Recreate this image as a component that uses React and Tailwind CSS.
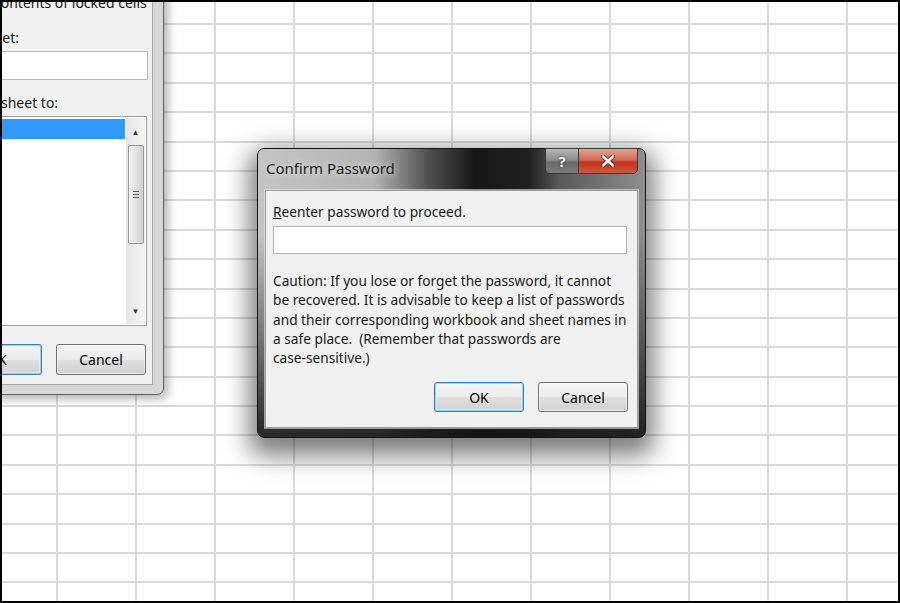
import React from "react";

const COLS = [56, 79, 79, 79, 79, 79, 79, 79, 79, 79, 79, 79];
const ROWS = [23, ...Array.from({ length: 20 }, () => 29.4)];

function Grid() {
  return (
    <div className="flex flex-col">
      {ROWS.map((h, r) => (
        <div key={r} className="flex border-b-2 border-[#dadada] box-border shrink-0" style={{ height: h }}>
          {COLS.map((w, c) => (
            <div key={c} className="border-r-2 border-[#dadada] box-border shrink-0 h-full" style={{ width: w }} />
          ))}
        </div>
      ))}
    </div>
  );
}

function WinButton({ children, def, className = "" }) {
  return (
    <div
      className={
        "flex items-center justify-center rounded-[3px] border text-[14px] text-black bg-[linear-gradient(180deg,#f4f4f4_0%,#ececec_50%,#dedede_51%,#d2d2d2_100%)] " +
        (def
          ? "border-[#3c7fb1] shadow-[inset_0_0_0_1px_rgba(120,200,245,0.75),inset_0_0_0_2px_rgba(230,245,253,0.6)] "
          : "border-[#707070] shadow-[inset_0_0_0_1px_rgba(255,255,255,0.6)] ") +
        className
      }
    >
      {children}
    </div>
  );
}

function LeftDialog() {
  return (
    <div className="absolute left-[-42px] top-[-42px] w-[204px] h-[435px] bg-[#d8d8d8] border border-[#5f5f5f] rounded-br-[7px] pr-[10px] pb-[9px] shadow-[4px_4px_10px_rgba(0,0,0,0.3)] box-border">
      <div className="w-full h-full bg-[#f0f0f0] border-r border-b border-[#a8a8a8] flex flex-col box-border text-[14px] leading-[19px] text-[#1a1a1a]">
        <div className="mt-[32px] ml-[33px] whitespace-nowrap">contents of locked cells</div>
        <div className="mt-[16px] ml-[18px] whitespace-nowrap">sheet:</div>
        <div className="mt-[4px] ml-[8px] w-[179px] h-[29px] bg-white border border-[#b8b8b8] box-border" />
        <div className="mt-[13px] ml-[40px] whitespace-nowrap">sheet to:</div>
        <div className="mt-[4px] ml-[8px] w-[178px] h-[210px] bg-white border border-[#a0a0a0] box-border flex">
          <div className="flex-1 pt-[2px]">
            <div className="h-[20px] w-[155px] bg-[#3399ff]" />
          </div>
          <div className="w-[19px] mr-[1px] mt-[1px] mb-[1px] bg-[linear-gradient(90deg,#e6e6e6,#f4f4f4)] flex flex-col items-center">
            <div className="h-[27px] flex items-center justify-center text-[8px] text-[#333]">▲</div>
            <div className="w-[16px] h-[99px] rounded-[2px] border border-[#9a9a9a] bg-[linear-gradient(90deg,#f4f4f4,#e2e2e2_50%,#cfcfcf)] flex flex-col items-center justify-center gap-[2px] box-border">
              <div className="w-[6px] h-[1px] bg-[#555]" />
              <div className="w-[6px] h-[1px] bg-[#555]" />
              <div className="w-[6px] h-[1px] bg-[#555]" />
            </div>
            <div className="flex-1" />
            <div className="h-[27px] flex items-center justify-center text-[8px] text-[#333]">▼</div>
          </div>
        </div>
        <div className="mt-[18px] flex gap-[14px] ml-[-9px]">
          <WinButton def className="w-[90px] h-[31px]">OK</WinButton>
          <WinButton className="w-[90px] h-[31px]">Cancel</WinButton>
        </div>
      </div>
    </div>
  );
}

function MainDialog() {
  return (
    <div className="absolute left-[255px] top-[146px] w-[389px] h-[290px] rounded-[7px] border border-[#141414] box-border flex flex-col shadow-[0_10px_24px_8px_rgba(0,0,0,0.5)] bg-[linear-gradient(180deg,rgba(0,0,0,0)_0%,rgba(0,0,0,0)_30%,rgba(22,22,22,0.9)_100%),linear-gradient(90deg,#c4c4c4_0%,#b4b4b4_30%,#505050_44%,#161616_56%,#202020_70%,#5a5a5a_78%,#8e8e8e_100%)]">
      <div className="relative h-[41px] shrink-0">
        <div className="pl-[8px] pt-[9px] text-[15px] leading-[20px] text-[#1c1c1c] [text-shadow:0_0_6px_rgba(255,255,255,0.8)]">
          Confirm Password
        </div>
        <div className="absolute top-[-1px] right-[7px] flex">
          <div className="w-[33px] h-[26px] rounded-bl-[5px] border border-[#3a3a3a] border-r-0 bg-[linear-gradient(180deg,#b8b8b8_0%,#8e8e8e_45%,#6a6a6a_55%,#7c7c7c_100%)] flex items-center justify-center text-white font-bold text-[15px] [text-shadow:0_0_3px_rgba(0,0,0,0.8)]">
            ?
          </div>
          <div className="w-[60px] h-[26px] rounded-br-[5px] border border-[#3a3a3a] bg-[linear-gradient(180deg,#e0a494_0%,#d46a55_45%,#c2321c_55%,#d0583e_100%)] flex items-center justify-center">
            <svg width="14" height="12" viewBox="0 0 14 12">
              <path d="M2 1.5 L12 10.5 M12 1.5 L2 10.5" stroke="#3a1a14" strokeWidth="4.2" strokeLinecap="round" />
              <path d="M2 1.5 L12 10.5 M12 1.5 L2 10.5" stroke="#ffffff" strokeWidth="2.6" strokeLinecap="round" />
            </svg>
          </div>
        </div>
      </div>
      <div className="flex-1 flex px-[7px] pb-[9px]">
        <div className="w-[373px] h-[238px] bg-[#f0f0f0] border border-[#9c9c9c] box-border shadow-[0_0_0_1px_rgba(230,230,230,0.6)] pl-[7px] pr-[8px] pt-[11px] text-[13.7px] leading-[19px] text-[#1a1a1a] flex flex-col">
          <div className="whitespace-nowrap">
            <span className="underline">R</span>eenter password to proceed.
          </div>
          <div className="mt-[5px] w-[354px] h-[28px] bg-white border border-[#b3b3b3] box-border" />
          <div className="mt-[17px] leading-[19.3px] whitespace-pre">
            {"Caution: If you lose or forget the password, it cannot\nbe recovered. It is advisable to keep a list of passwords\nand their corresponding workbook and sheet names in\na safe place.  (Remember that passwords are\ncase-sensitive.)"}
          </div>
          <div className="mt-[15px] flex justify-end gap-[14px] pr-[1px]">
            <WinButton def className="w-[90px] h-[30px]">OK</WinButton>
            <WinButton className="w-[90px] h-[30px]">Cancel</WinButton>
          </div>
        </div>
      </div>
    </div>
  );
}

export default function App() {
  return (
    <div
      className="relative w-[900px] h-[603px] overflow-hidden bg-white border-2 border-black box-border"
      style={{ fontFamily: '"Noto Sans", "Open Sans", sans-serif' }}
    >
      <Grid />
      <LeftDialog />
      <MainDialog />
    </div>
  );
}
